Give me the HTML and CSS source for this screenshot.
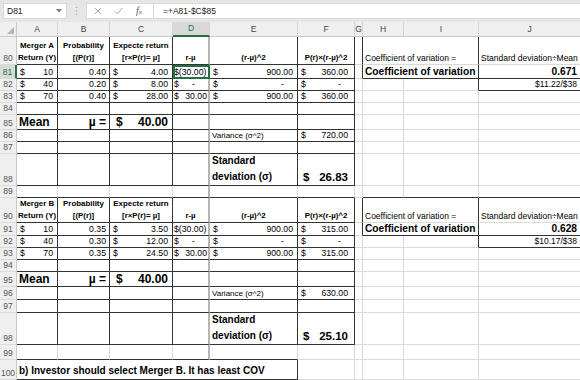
FILE: index.html
```html
<!DOCTYPE html>
<html>
<head>
<meta charset="utf-8">
<link rel="stylesheet" href="styles.css">
</head>
<body>
<div class="fbar">
  <div class="namebox"><span>D81</span><svg width="6" height="4" viewBox="0 0 6 4"><polygon points="0,0 6,0 3,3.5" fill="#7a7a7a"/></svg></div>
  <div class="grip"><svg width="3" height="10" viewBox="0 0 3 10"><circle cx="1.5" cy="1.5" r="0.8" fill="#b0b0b0"/><circle cx="1.5" cy="5" r="0.8" fill="#b0b0b0"/><circle cx="1.5" cy="8.5" r="0.8" fill="#b0b0b0"/></svg></div>
  <div class="fxbox">
    <div class="fxbtns">
      <svg class="ic-x" width="8" height="8" viewBox="0 0 8 8"><path d="M1 1 L7 7 M7 1 L1 7" stroke="#a8a8a8" stroke-width="1" fill="none"/></svg>
      <svg class="ic-ok" width="9" height="8" viewBox="0 0 9 8"><path d="M1 4.5 L3.5 7 L8 1" stroke="#a8a8a8" stroke-width="1" fill="none"/></svg>
      <span class="fxi">f<span class="fxs">x</span></span>
    </div>
    <div class="formula">=+A81-$C$85</div>
  </div>
</div>
<div class="sheet">
  <div class="corner"><svg width="7" height="7" viewBox="0 0 7 7"><polygon points="7,0 7,7 0,7" fill="#b4b4b4"/></svg></div>
  <div class="ch">A</div><div class="ch">B</div><div class="ch">C</div><div class="ch csel">D</div><div class="ch">E</div><div class="ch">F</div><div class="ch">G</div><div class="ch">H</div><div class="ch">I</div><div class="ch">J</div>

  <div class="rh">80</div>
  <div class="b hd"><span>Merger A<br>Return (Y)</span></div>
  <div class="b hd"><span>Probability<br>[(P(r)]</span></div>
  <div class="b hd"><span>Expecte return<br>[r×P(r)= µ]</span></div>
  <div class="b fz hd"><span>r-µ</span></div>
  <div class="b hd"><span>(r-µ)^2</span></div>
  <div class="b hd"><span>P(r)×(r-µ)^2</span></div>
  <div class="br"></div>
  <div class="br s2 sm"><span>Coefficient of variation =</span></div>
  <div class="sm"><span>Standard deviation÷Mean</span></div>

  <div class="rh rsel">81</div>
  <div class="b acc"><span>$</span><span>10</span></div>
  <div class="b r"><span>0.40</span></div>
  <div class="b acc"><span>$</span><span>4.00</span></div>
  <div class="b fz dc sel"><span>$(30.00)</span></div>
  <div class="b acc"><span>$</span><span>900.00</span></div>
  <div class="b acc pf"><span>$</span><span>360.00</span></div>
  <div class="br"></div>
  <div class="b s2 big"><span>Coefficient of variation</span></div>
  <div class="bb r big"><span>0.671</span></div>

  <div class="rh">82</div>
  <div class="b acc"><span>$</span><span>40</span></div>
  <div class="b r"><span>0.20</span></div>
  <div class="b acc"><span>$</span><span>8.00</span></div>
  <div class="b fz acc dc dash"><span>$</span><span>-</span></div>
  <div class="b acc dash"><span>$</span><span>-</span></div>
  <div class="b acc dash"><span>$</span><span>-</span></div>
  <div></div><div></div><div class="br"></div>
  <div class="bb r sm"><span>$11.22/$38</span></div>

  <div class="rh">83</div>
  <div class="b acc"><span>$</span><span>70</span></div>
  <div class="b r"><span>0.40</span></div>
  <div class="b acc"><span>$</span><span>28.00</span></div>
  <div class="b fz acc dc"><span>$</span><span>30.00</span></div>
  <div class="b acc"><span>$</span><span>900.00</span></div>
  <div class="b acc pf"><span>$</span><span>360.00</span></div>
  <div></div><div></div><div></div><div></div>

  <div class="rh">84</div>
  <div class="b"></div><div class="b"></div><div class="b"></div><div class="b fz"></div><div class="b"></div><div class="b"></div>
  <div></div><div></div><div></div><div></div>

  <div class="rh">85</div>
  <div class="b mean"><span>Mean</span></div>
  <div class="b r mean"><span>µ =</span></div>
  <div class="b acc mean"><span>$</span><span>40.00</span></div>
  <div class="b fz"></div><div class="b"></div><div class="b"></div>
  <div></div><div></div><div></div><div></div>

  <div class="rh">86</div>
  <div class="b"></div><div class="b"></div><div class="b"></div><div class="b fz"></div>
  <div class="b xs"><span>Variance (σ^2)</span></div>
  <div class="b acc pf"><span>$</span><span>720.00</span></div>
  <div></div><div></div><div></div><div></div>

  <div class="rh">87</div>
  <div class="b"></div><div class="b"></div><div class="b"></div><div class="b fz"></div><div class="b"></div><div class="b"></div>
  <div></div><div></div><div></div><div></div>

  <div class="rh">88</div>
  <div class="b"></div><div class="b"></div><div class="b"></div><div class="b fz"></div>
  <div class="b sd"><span>Standard<br>deviation (σ)</span></div>
  <div class="b acc sdv pf"><span>$</span><span>26.83</span></div>
  <div></div><div></div><div></div><div></div>

  <div class="rh">89</div>
  <div class="bb"></div><div class="bb"></div><div class="bb"></div><div class="bb fz"></div><div class="bb"></div><div class="bb"></div>
  <div></div><div class="bb"></div><div class="bb"></div><div class="bb"></div>

  <div class="rh">90</div>
  <div class="b hd"><span>Merger B<br>Return (Y)</span></div>
  <div class="b hd"><span>Probability<br>[(P(r)]</span></div>
  <div class="b hd"><span>Expecte return<br>[r×P(r)= µ]</span></div>
  <div class="b fz hd"><span>r-µ</span></div>
  <div class="b hd"><span>(r-µ)^2</span></div>
  <div class="b hd"><span>P(r)×(r-µ)^2</span></div>
  <div class="br"></div>
  <div class="br s2 sm"><span>Coefficient of variation =</span></div>
  <div class="sm"><span>Standard deviation÷Mean</span></div>

  <div class="rh">91</div>
  <div class="b acc"><span>$</span><span>10</span></div>
  <div class="b r"><span>0.35</span></div>
  <div class="b acc"><span>$</span><span>3.50</span></div>
  <div class="b fz dc"><span>$(30.00)</span></div>
  <div class="b acc"><span>$</span><span>900.00</span></div>
  <div class="b acc pf"><span>$</span><span>315.00</span></div>
  <div class="br"></div>
  <div class="b s2 big"><span>Coefficient of variation</span></div>
  <div class="bb r big"><span>0.628</span></div>

  <div class="rh">92</div>
  <div class="b acc"><span>$</span><span>40</span></div>
  <div class="b r"><span>0.30</span></div>
  <div class="b acc"><span>$</span><span>12.00</span></div>
  <div class="b fz acc dc dash"><span>$</span><span>-</span></div>
  <div class="b acc dash"><span>$</span><span>-</span></div>
  <div class="b acc dash"><span>$</span><span>-</span></div>
  <div></div><div></div><div class="br"></div>
  <div class="bb r sm"><span>$10.17/$38</span></div>

  <div class="rh">93</div>
  <div class="b acc"><span>$</span><span>70</span></div>
  <div class="b r"><span>0.35</span></div>
  <div class="b acc"><span>$</span><span>24.50</span></div>
  <div class="b fz acc dc"><span>$</span><span>30.00</span></div>
  <div class="b acc"><span>$</span><span>900.00</span></div>
  <div class="b acc pf"><span>$</span><span>315.00</span></div>
  <div></div><div></div><div></div><div></div>

  <div class="rh">94</div>
  <div class="b"></div><div class="b"></div><div class="b"></div><div class="b fz"></div><div class="b"></div><div class="b"></div>
  <div></div><div></div><div></div><div></div>

  <div class="rh">95</div>
  <div class="b mean"><span>Mean</span></div>
  <div class="b r mean"><span>µ =</span></div>
  <div class="b acc mean"><span>$</span><span>40.00</span></div>
  <div class="b fz"></div><div class="b"></div><div class="b"></div>
  <div></div><div></div><div></div><div></div>

  <div class="rh">96</div>
  <div class="b"></div><div class="b"></div><div class="b"></div><div class="b fz"></div>
  <div class="b xs"><span>Variance (σ^2)</span></div>
  <div class="b acc pf"><span>$</span><span>630.00</span></div>
  <div></div><div></div><div></div><div></div>

  <div class="rh">97</div>
  <div class="b"></div><div class="b"></div><div class="b"></div><div class="b fz"></div><div class="b"></div><div class="b"></div>
  <div></div><div></div><div></div><div></div>

  <div class="rh">98</div>
  <div class="b"></div><div class="b"></div><div class="b"></div><div class="b fz"></div>
  <div class="b sd"><span>Standard<br>deviation (σ)</span></div>
  <div class="b acc sdv pf"><span>$</span><span>25.10</span></div>
  <div></div><div></div><div></div><div></div>

  <div class="rh">99</div>
  <div class="bb"></div><div class="bb"></div><div class="bb"></div><div class="bb fz"></div><div class="bb"></div>
  <div></div><div></div><div></div><div></div><div></div>

  <div class="rh">100</div>
  <div class="b s5 concl"><span>b) Investor should select Merger B. It has least COV</span></div>
  <div></div><div></div><div></div><div></div><div></div>
</div>
</body>
</html>
```

FILE: styles.css
```css
* { box-sizing: border-box; }
html, body { margin: 0; padding: 0; }
body {
  width: 580px;
  height: 380px;
  overflow: hidden;
  background: #ffffff;
  font-family: "Liberation Sans", Arial, sans-serif;
  color: #000;
}

/* formula bar */
.fbar {
  height: 22px;
  background: #e6e6e6;
  display: flex;
  align-items: flex-start;
  padding-top: 3px;
}
.namebox {
  margin-left: 3px;
  width: 64px;
  height: 16px;
  background: #fff;
  border: 1px solid #d9d9d9;
  display: flex;
  align-items: center;
  justify-content: space-between;
  padding: 0 4px 0 3px;
  font-size: 8.5px;
  color: #222;
}
.grip {
  width: 19px;
  height: 16px;
  display: flex;
  align-items: center;
  justify-content: center;
}
.fxbox {
  flex: 1;
  height: 16px;
  display: flex;
  background: #fff;
  border: 1px solid #d9d9d9;
  border-right: none;
}
.fxbtns {
  width: 67px;
  display: flex;
  align-items: center;
  border-right: 1px solid #d9d9d9;
  padding-left: 7px;
}
.ic-x { margin-right: 12px; }
.ic-ok { margin-right: 13px; }
.fxi {
  font-family: "Liberation Serif", serif;
  font-style: italic;
  font-size: 10px;
  color: #555;
  line-height: 1;
}
.fxs { font-size: 7px; }
.formula {
  display: flex;
  align-items: center;
  padding-left: 9px;
  font-size: 8.5px;
  color: #222;
}

/* sheet grid */
.sheet {
  display: grid;
  grid-template-columns: 17px 41px 52px 63px 37px 88px 57px 8px 41px 75px 102px;
  grid-template-rows: 15px 28px 14px 12px 12px 12px 15px 12px 12px 32px 12px 25px 13px 12px 12px 12px 15px 13px 13px 32px 15px 20px;
  width: 581px;
}
.sheet div {
  border-right: 1px solid #dadada;
  border-bottom: 1px solid #dadada;
  display: flex;
  align-items: flex-end;
  padding: 0 2px;
  font-size: 8.7px;
  line-height: 11px;
  white-space: nowrap;
  overflow: hidden;
  min-width: 0;
}
.sheet .corner {
  background: #efefef;
  border-right: 1px solid #c9c9c9;
  border-bottom: 1px solid #c9c9c9;
  justify-content: flex-end;
  padding: 0 2px 2px 0;
}
.sheet .ch {
  background: #efefef;
  border-right: 1px solid #d4d4d4;
  border-bottom: 1px solid #c9c9c9;
  color: #444;
  font-size: 8.5px;
  justify-content: center;
  align-items: center;
}
.sheet .csel {
  background: #d9d9d9;
  color: #217346;
  border-bottom: 2px solid #217346;
}
.sheet .rh {
  background: #efefef;
  border-right: 1px solid #c9c9c9;
  border-bottom: 1px solid #dadada;
  color: #555;
  font-size: 8.5px;
  justify-content: center;
  padding: 0;
}
.sheet .rsel {
  background: #d9d9d9;
  color: #217346;
  border-right: 2px solid #217346;
}

/* borders */
.sheet .b { border-right-color: #333; border-bottom-color: #333; }
.sheet .br { border-right-color: #333; }
.sheet .bb { border-bottom-color: #333; }
.sheet .fz { border-right: 2px solid #b5b5b5; }
.sheet .s2 { grid-column: span 2; }
.sheet .s5 { grid-column: span 5; }

/* alignment */
.sheet .r { justify-content: flex-end; padding-right: 3px; }
.sheet .acc { justify-content: space-between; padding-left: 3px; padding-right: 4px; }
.sheet .pf { padding-right: 6px; }
.sheet .dc { padding-left: 1px; padding-right: 1px; }
.sheet .dash { padding-right: 13px; }

/* text styles */
.sheet .hd {
  font-weight: 700;
  font-size: 7.9px;
  line-height: 12px;
  justify-content: center;
  text-align: center;
  white-space: nowrap;
  padding: 0;
}
.sheet .sm { font-size: 8.5px; }
.sheet .xs { font-size: 8px; }
.sheet .big { font-weight: 700; font-size: 10.2px; line-height: 13px; }
.sheet .mean { font-weight: 700; font-size: 12px; line-height: 14px; }
.sheet .mean.acc { padding-left: 6px; }
.sheet .sd { font-weight: 700; font-size: 10px; line-height: 16px; white-space: normal; }
.sheet .sdv { font-weight: 700; font-size: 11.5px; line-height: 15px; padding-left: 5px; }
.sheet .concl { font-weight: 700; font-size: 10px; line-height: 17px; }

/* selected cell */
.sheet .sel {
  outline: 2px solid #217346;
  outline-offset: -2px;
}
```
